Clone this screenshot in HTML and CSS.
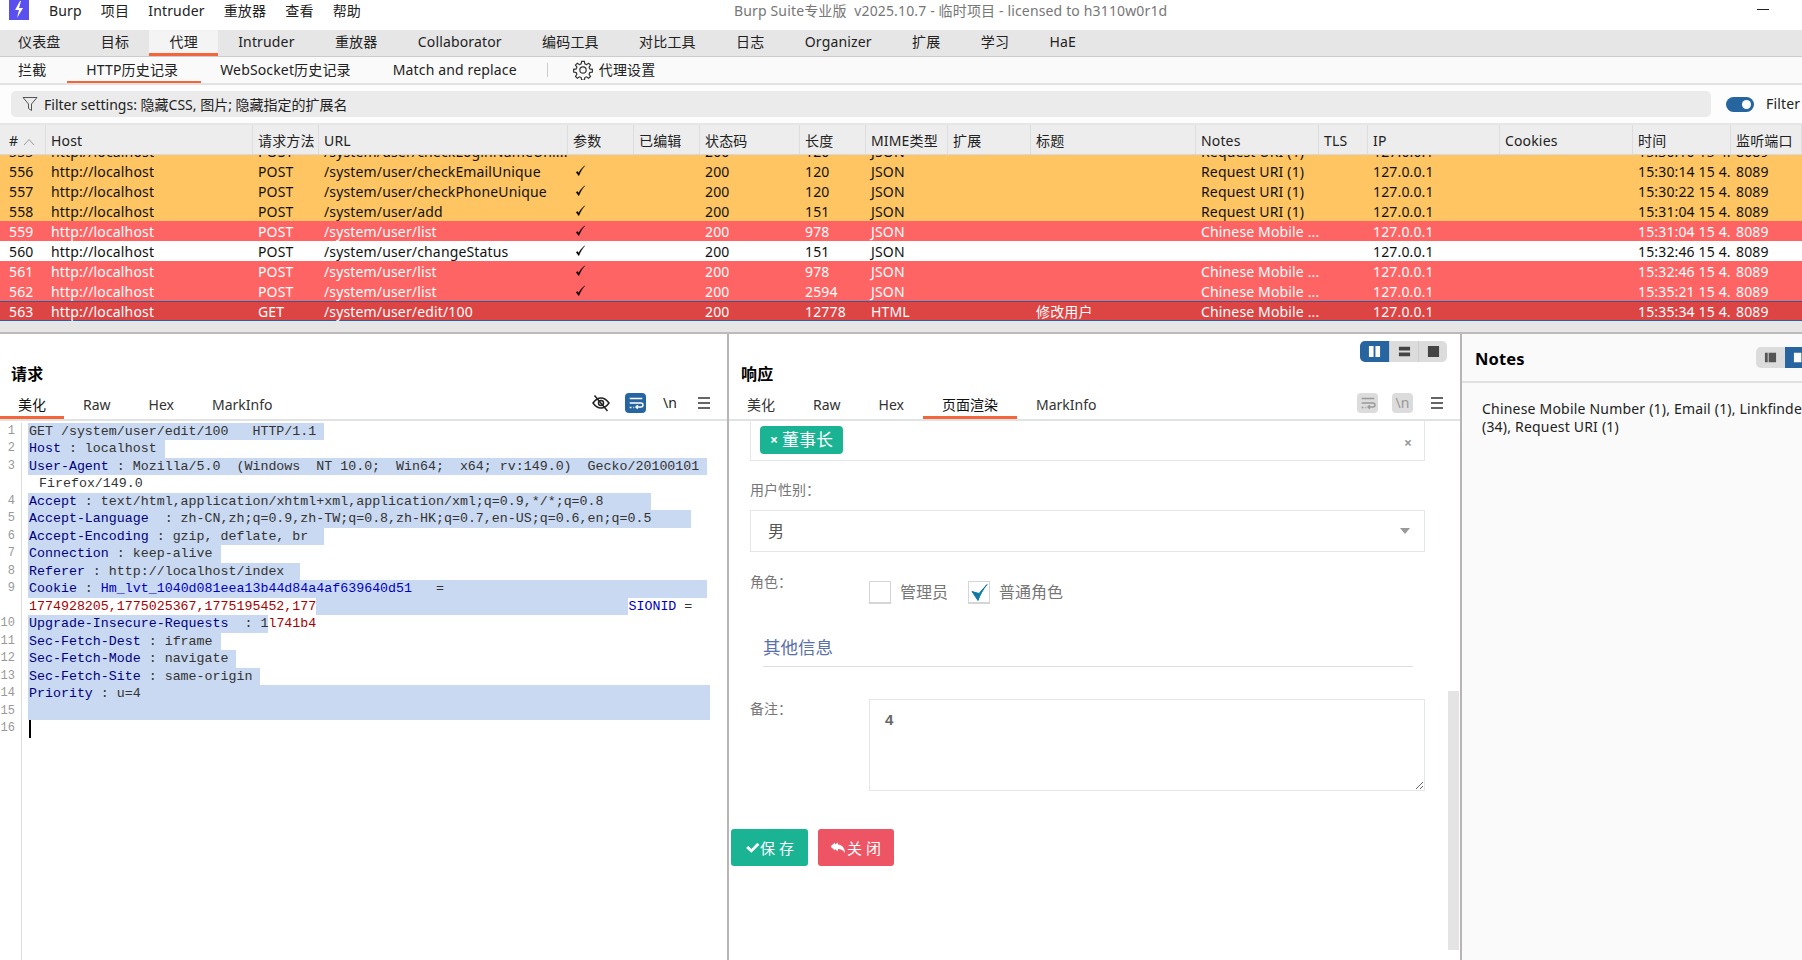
FILE: index.html
```html
<!DOCTYPE html>
<html lang="zh">
<head>
<meta charset="utf-8">
<title>Burp Suite</title>
<link rel="stylesheet" href="styles.css">
</head>
<body>
<header class="titlebar">
  <div class="logo"><svg viewBox="0 0 20 20" width="20" height="20"><path d="M11 1 6 10h4l-2 8 6-10h-4l2-7z" fill="#fff"/></svg></div>
  <nav class="menu"><span>Burp</span><span>项目</span><span>Intruder</span><span>重放器</span><span>查看</span><span>帮助</span></nav>
  <div class="apptitle">Burp Suite专业版&nbsp; v2025.10.7 - 临时项目 - licensed to h3110w0r1d</div>
  <div class="minimize"></div>
</header>

<nav class="maintabs">
  <span class="mtab">仪表盘</span><span class="mtab">目标</span><span class="mtab active">代理</span><span class="mtab">Intruder</span><span class="mtab">重放器</span><span class="mtab">Collaborator</span><span class="mtab">编码工具</span><span class="mtab">对比工具</span><span class="mtab">日志</span><span class="mtab">Organizer</span><span class="mtab">扩展</span><span class="mtab">学习</span><span class="mtab">HaE</span>
</nav>

<nav class="subtabs">
  <span class="stab">拦截</span><span class="stab active">HTTP历史记录</span><span class="stab">WebSocket历史记录</span><span class="stab">Match and replace</span>
  <span class="subsep"></span>
  <span class="settings">
    <svg viewBox="0 0 22 22" width="20" height="20" fill="none" stroke="#333" stroke-width="1.3"><path d="M9.500 1.500h3l.5 2.800 1.900.8 2.300-1.600 2.100 2.100-1.600 2.300.8 1.900 2.800.5v3l-2.800.5-.8 1.900 1.600 2.300-2.100 2.100-2.300-1.600-1.900.8-.5 2.800h-3l-.5-2.800-1.900-.8-2.300 1.600-2.100-2.100 1.600-2.300-.8-1.900-2.800-.5v-3l2.800-.5.8-1.900-1.600-2.300 2.100-2.100 2.300 1.600 1.900-.8z"/><circle cx="11" cy="11" r="3.500"/></svg>
    代理设置
  </span>
</nav>

<section class="filterrow">
  <div class="filterbar">
    <svg viewBox="0 0 16 16" width="16" height="16" fill="none" stroke="#555" stroke-width="1"><path d="M1 1.500h14L9.500 8v6.500l-3-2V8z"/></svg>
    <span>Filter settings: 隐藏CSS, 图片; 隐藏指定的扩展名</span>
  </div>
  <span class="toggle"><i></i></span>
  <span class="filterlabel">Filter</span>
</section>

<section class="table">
  <div class="row head">
    <span><b>#</b><svg class="sort" viewBox="0 0 12 8" width="12" height="8" fill="none" stroke="#999" stroke-width="1"><path d="M1 7l5-5.500 5 5.500"/></svg></span><span>Host</span><span>请求方法</span><span>URL</span><span>参数</span><span>已编辑</span><span>状态码</span><span>长度</span><span>MIME类型</span><span>扩展</span><span>标题</span><span>Notes</span><span>TLS</span><span>IP</span><span>Cookies</span><span>时间</span><span>监听端口</span>
  </div>
  <div class="rows">
    <div class="row orange partial"><span>555</span><span>http://localhost</span><span>POST</span><span>/system/user/checkLoginNameUni...</span><span></span><span></span><span>200</span><span>120</span><span>JSON</span><span></span><span></span><span>Request URI (1)</span><span></span><span>127.0.0.1</span><span></span><span>15:30:10 15 4...</span><span>8089</span></div>
    <div class="row orange"><span>556</span><span>http://localhost</span><span>POST</span><span>/system/user/checkEmailUnique</span><span><svg class="tick" viewBox="0 0 12 14"><path d="M1 8.500l3 4C6 8 8 4 11 1 7.500 3.500 5.500 6.500 4 9.500L2.500 7.500z"/></svg></span><span></span><span>200</span><span>120</span><span>JSON</span><span></span><span></span><span>Request URI (1)</span><span></span><span>127.0.0.1</span><span></span><span>15:30:14 15 4...</span><span>8089</span></div>
    <div class="row orange"><span>557</span><span>http://localhost</span><span>POST</span><span>/system/user/checkPhoneUnique</span><span><svg class="tick" viewBox="0 0 12 14"><path d="M1 8.500l3 4C6 8 8 4 11 1 7.500 3.500 5.500 6.500 4 9.500L2.500 7.500z"/></svg></span><span></span><span>200</span><span>120</span><span>JSON</span><span></span><span></span><span>Request URI (1)</span><span></span><span>127.0.0.1</span><span></span><span>15:30:22 15 4...</span><span>8089</span></div>
    <div class="row orange"><span>558</span><span>http://localhost</span><span>POST</span><span>/system/user/add</span><span><svg class="tick" viewBox="0 0 12 14"><path d="M1 8.500l3 4C6 8 8 4 11 1 7.500 3.500 5.500 6.500 4 9.500L2.500 7.500z"/></svg></span><span></span><span>200</span><span>151</span><span>JSON</span><span></span><span></span><span>Request URI (1)</span><span></span><span>127.0.0.1</span><span></span><span>15:31:04 15 4...</span><span>8089</span></div>
    <div class="row red"><span>559</span><span>http://localhost</span><span>POST</span><span>/system/user/list</span><span><svg class="tick" viewBox="0 0 12 14"><path d="M1 8.500l3 4C6 8 8 4 11 1 7.500 3.500 5.500 6.500 4 9.500L2.500 7.500z"/></svg></span><span></span><span>200</span><span>978</span><span>JSON</span><span></span><span></span><span>Chinese Mobile ...</span><span></span><span>127.0.0.1</span><span></span><span>15:31:04 15 4...</span><span>8089</span></div>
    <div class="row"><span>560</span><span>http://localhost</span><span>POST</span><span>/system/user/changeStatus</span><span><svg class="tick" viewBox="0 0 12 14"><path d="M1 8.500l3 4C6 8 8 4 11 1 7.500 3.500 5.500 6.500 4 9.500L2.500 7.500z"/></svg></span><span></span><span>200</span><span>151</span><span>JSON</span><span></span><span></span><span></span><span></span><span>127.0.0.1</span><span></span><span>15:32:46 15 4...</span><span>8089</span></div>
    <div class="row red"><span>561</span><span>http://localhost</span><span>POST</span><span>/system/user/list</span><span><svg class="tick" viewBox="0 0 12 14"><path d="M1 8.500l3 4C6 8 8 4 11 1 7.500 3.500 5.500 6.500 4 9.500L2.500 7.500z"/></svg></span><span></span><span>200</span><span>978</span><span>JSON</span><span></span><span></span><span>Chinese Mobile ...</span><span></span><span>127.0.0.1</span><span></span><span>15:32:46 15 4...</span><span>8089</span></div>
    <div class="row red"><span>562</span><span>http://localhost</span><span>POST</span><span>/system/user/list</span><span><svg class="tick" viewBox="0 0 12 14"><path d="M1 8.500l3 4C6 8 8 4 11 1 7.500 3.500 5.500 6.500 4 9.500L2.500 7.500z"/></svg></span><span></span><span>200</span><span>2594</span><span>JSON</span><span></span><span></span><span>Chinese Mobile ...</span><span></span><span>127.0.0.1</span><span></span><span>15:35:21 15 4...</span><span>8089</span></div>
    <div class="row selected"><span>563</span><span>http://localhost</span><span>GET</span><span>/system/user/edit/100</span><span></span><span></span><span>200</span><span>12778</span><span>HTML</span><span></span><span>修改用户</span><span>Chinese Mobile ...</span><span></span><span>127.0.0.1</span><span></span><span>15:35:34 15 4...</span><span>8089</span></div>
  </div>
</section>
<div class="hsplit"></div>

<main class="panes">
  <section class="pane request">
    <div class="panehead"><h2>请求</h2></div>
    <div class="panetabs">
      <span class="ptab active first">美化</span><span class="ptab">Raw</span><span class="ptab">Hex</span><span class="ptab">MarkInfo</span>
      <div class="tools">
        <svg class="tool" viewBox="0 0 20 20" fill="none" stroke="#222" stroke-width="1.500"><path d="M2 10c2.500-3.500 5-5 8-5s5.500 1.500 8 5c-2.500 3.500-5 5-8 5s-5.500-1.500-8-5z"/><circle cx="10" cy="10" r="2.500"/><path d="M3.500 2.500l13 15.500"/></svg>
        <span class="iconbtn on"><svg viewBox="0 0 20 20" fill="none" stroke="#fff" stroke-width="1.600"><path d="M3 5h14M3 10h12.500a2 2 0 0 1 0 4.500H10M12 12.500l-2 2 2 2M3 15h2M7 15h1"/></svg></span>
        <span class="nl">\n</span>
        <svg class="tool" viewBox="0 0 20 20" fill="none" stroke="#333" stroke-width="1.600"><path d="M4 5h12M4 10h12M4 15h12"/></svg>
      </div>
    </div>
    <div class="editor">
      <div class="ln"><i>1</i><code><span class="sel">GET /system/user/edit/100   HTTP/1.1 </span></code></div>
      <div class="ln"><i>2</i><code><span class="sel"><b>Host</b> : localhost </span></code></div>
      <div class="ln"><i>3</i><code><span class="sel"><b>User-Agent</b> : Mozilla/5.0  (Windows  NT 10.0;  Win64;  x64; rv:149.0)  Gecko/20100101 </span></code></div>
      <div class="ln"><i></i><code class="indent">Firefox/149.0</code></div>
      <div class="ln"><i>4</i><code><span class="sel"><b>Accept</b> : text/html,application/xhtml+xml,application/xml;q=0.9,*/*;q=0.8      </span></code></div>
      <div class="ln"><i>5</i><code><span class="sel"><b>Accept-Language</b>  : zh-CN,zh;q=0.9,zh-TW;q=0.8,zh-HK;q=0.7,en-US;q=0.6,en;q=0.5     </span></code></div>
      <div class="ln"><i>6</i><code><span class="sel"><b>Accept-Encoding</b> : gzip, deflate, br  </span></code></div>
      <div class="ln"><i>7</i><code><span class="sel"><b>Connection</b> : keep-alive </span></code></div>
      <div class="ln"><i>8</i><code><span class="sel"><b>Referer</b> : http://localhost/index  </span></code></div>
      <div class="ln"><i>9</i><code><span class="sel"><b>Cookie</b> : <u>Hm_lvt_1040d081eea13b44d84a4af639640d51</u>   =                                 </span></code></div>
      <div class="ln"><i></i><code><s>1774928205,1775025367,1775195452,177</s><span class="sel">                                       </span><u>SIONID</u> =</code></div>
      <div class="ln"><i>10</i><code><span class="sel"><b>Upgrade-Insecure-Requests</b>  : 1</span><s>l741b4</s></code></div>
      <div class="ln"><i>11</i><code><span class="sel"><b>Sec-Fetch-Dest</b> : iframe </span></code></div>
      <div class="ln"><i>12</i><code><span class="sel"><b>Sec-Fetch-Mode</b> : navigate </span></code></div>
      <div class="ln"><i>13</i><code><span class="sel"><b>Sec-Fetch-Site</b> : same-origin </span></code></div>
      <div class="ln"><i>14</i><code><span class="sel wide"><b>Priority</b> : u=4</span></code></div>
      <div class="ln"><i>15</i><code><span class="sel wide"></span></code></div>
      <div class="ln"><i>16</i><code><span class="caret"></span></code></div>
      <div class="gutterfill"></div>
    </div>
  </section>

  <section class="pane response">
    <div class="panehead">
      <h2>响应</h2>
      <div class="layoutbtns">
        <span class="lb on"><svg viewBox="0 0 14 14"><path d="M1 1h5v12H1zM8 1h5v12H8z" fill="#fff"/></svg></span>
        <span class="lb"><svg viewBox="0 0 14 14"><path d="M1 2h12v4H1zM1 8h12v4H1z" fill="#444"/></svg></span>
        <span class="lb"><svg viewBox="0 0 14 14"><path d="M1 1h12v12H1z" fill="#444"/></svg></span>
      </div>
    </div>
    <div class="panetabs">
      <span class="ptab">美化</span><span class="ptab">Raw</span><span class="ptab">Hex</span><span class="ptab active">页面渲染</span><span class="ptab">MarkInfo</span>
      <div class="tools">
        <span class="iconbtn off"><svg viewBox="0 0 20 20" fill="none" stroke="#999" stroke-width="1.600"><path d="M3 5h14M3 10h12.500a2 2 0 0 1 0 4.500H10M12 12.500l-2 2 2 2M3 15h2M7 15h1"/></svg></span>
        <span class="iconbtn off nloff">\n</span>
        <svg class="tool" viewBox="0 0 20 20" fill="none" stroke="#333" stroke-width="1.600"><path d="M4 5h12M4 10h12M4 15h12"/></svg>
      </div>
    </div>
    <div class="webview">
      <form class="form">
        <div class="multi"><span class="tag"><em>×</em>董事长</span><span class="clear">×</span></div>
        <label class="flabel gender">用户性别：</label>
        <div class="select"><span>男</span><i class="caretdown"></i></div>
        <div class="roles">
          <label class="flabel rolelabel">角色：</label>
          <span class="check"></span><span class="checklabel">管理员</span>
          <span class="check"><svg viewBox="0 0 20 20" width="20" height="21"><path d="M3 9l6 9C11 12 14 7 18 2l-8 9z" fill="#0e7aa5" stroke="#0e7aa5"/></svg></span><span class="checklabel">普通角色</span>
        </div>
        <h4 class="section">其他信息</h4>
        <div class="remark">
          <label class="flabel">备注：</label>
          <textarea class="note" readonly>4</textarea>
        </div>
      </form>
      <div class="actions">
        <button type="button" class="btn save"><svg viewBox="0 0 14 12" width="15" height="13"><path d="M1 6.500l2-2 3 3L11.500 1.500l2 2L6 11z" fill="#fff"/></svg>保 存</button>
        <button type="button" class="btn close"><svg viewBox="0 0 16 12" width="16" height="13"><path d="M7 1 1 5l6 5V7.500c3 0 5 1 7 4 0-5-3-8-7-8.500zM4 1 0 4.500 0 5.500 4 9z" fill="#fff"/></svg>关 闭</button>
      </div>
      <div class="vscroll"></div>
    </div>
  </section>

  <aside class="notes">
    <div class="noteshead">
      <h3>Notes</h3>
      <div class="notebtns">
        <span class="nb"><svg viewBox="0 0 14 14" width="13" height="13"><path d="M1 2h3v10H1zM5 2h8v10H5z" fill="#555"/></svg></span>
        <span class="nb on"><svg viewBox="0 0 14 14" width="13" height="13"><path d="M1 2h8v10H1z" fill="#fff"/></svg></span>
      </div>
    </div>
    <p class="notestext">Chinese Mobile Number (1), Email (1), Linkfinder (34), Request URI (1)</p>
  </aside>
</main>
</body>
</html>
```
FILE: styles.css
```css
* { box-sizing: border-box; }
html, body { margin: 0; padding: 0; }
body {
  width: 1802px; height: 960px; overflow: hidden;
  display: flex; flex-direction: column;
  background: #fff; color: #111;
  font: 14px/20px "Noto Sans", "Noto Sans CJK SC", sans-serif;
  letter-spacing: .15px;
}

/* title bar */
.titlebar { height: 30px; display: flex; align-items: flex-start; position: relative; flex: none; }
.logo { width: 20px; height: 20px; margin-left: 9px; background: #5a50f0; flex: none; }
.menu { display: flex; margin-left: 20px; padding-top: 1px; color: #222; }
.menu span { margin-right: 19.100px; }
.apptitle { position: absolute; left: 734px; top: 1px; color: #777; white-space: nowrap; }
.minimize { position: absolute; left: 1757px; top: 9px; width: 12px; height: 1px; background: #222; }

/* main tabs */
.maintabs { height: 27px; flex: none; display: flex; background: #e6e6e6; border-bottom: 1px solid #ccc; padding-left: 18px; }
.mtab { padding: 2px 20.200px 0; height: 26px; color: #222; white-space: nowrap; }
.mtab:first-child { padding-left: 0; }
.mtab.active { background: #f4f4f4; border-bottom: 3px solid #f4663a; }

/* sub tabs */
.subtabs { height: 28px; flex: none; display: flex; align-items: flex-start; background: #fafafa; border-bottom: 2px solid #e2e2e2; padding-left: 18px; }
.stab { height: 26px; padding: 3px 0 0; margin-right: 42px; color: #222; white-space: nowrap; position: relative; }
.stab:first-child { margin-right: 40px; }
.stab.active::after { content: ""; position: absolute; left: -19px; right: -23px; bottom: 0; height: 2.500px; background: #f4663a; }
.subsep { width: 1px; height: 14px; margin: 6px 25px 0 -12px; background: #ccc; }
.settings { display: flex; align-items: center; gap: 6px; padding-top: 3px; color: #222; }

/* filter */
.filterrow { height: 40px; flex: none; display: flex; align-items: center; padding: 0 0 0 11px; background: #fdfdfd; border-bottom: 2px solid #e6e6e6; }
.filterbar { width: 1700px; height: 26px; display: flex; align-items: center; gap: 6px; padding-left: 11px; background: #ebebeb; border-radius: 5px; color: #222; flex: none; letter-spacing: 0; }
.filterbar span { padding-top: 2px; }
.toggle { width: 28px; height: 15px; margin-left: 15px; border-radius: 8px; background: #26659f; position: relative; flex: none; }
.toggle i { position: absolute; right: 3px; top: 3px; width: 9px; height: 9px; border-radius: 50%; background: #fff; }
.filterlabel { margin-left: 12px; color: #222; }

/* table */
.table { flex: none; overflow: hidden; }
.row {
  display: grid;
  grid-template-columns: 46px 207px 66px 249px 66px 66px 100px 66px 82px 83px 165px 123px 49px 132px 133px 98px 71px;
  height: 20px; line-height: 20px; color: #111; background: #fff;
}
.row > span { padding: 1px 0 0 5px; overflow: hidden; white-space: nowrap; }
.row > span:first-child { padding-left: 9px; }
.head { height: 30px; line-height: 30px; background: #ededed; position: relative; z-index: 1; border-bottom: 1px solid #d8d8d8; color: #222; }
.head > span { border-right: 1px solid #ddd; }
.head b { font-weight: 400; }
.sort { margin-left: 5px; }
.rows { height: 166px; overflow: hidden; }
.partial { margin-top: -14px; }
.orange { background: #fec562; }
.red { background: #ff6464; color: #fff; }
.selected { background: #dd4444; color: #fff; box-shadow: inset 0 1px 0 #2a6099, inset 0 -1px 0 #2a6099; }
.tick { width: 11px; height: 12px; margin: 3px 0 0 2px; fill: #000; stroke: #000; stroke-width: .5px; }
.hsplit { height: 13px; flex: none; background: #e6e6e6; border-bottom: 2px solid #bbb; }

/* panes */
.panes { flex: 1; display: flex; min-height: 0; }
.pane { display: flex; flex-direction: column; flex: none; border-right: 2px solid #b9b5b5; }
.request { width: 729px; }
.response { width: 733px; }
.panehead { height: 50px; display: flex; justify-content: space-between; align-items: flex-start; padding: 7px 13px 0 11px; }
.panehead h2 { margin: 23px 0 0; font-size: 16px; line-height: 20px; font-weight: 700; color: #000; }
.response .panehead { padding-left: 12px; }
.layoutbtns { display: flex; height: 21px; border-radius: 5px; overflow: hidden; }
.lb { width: 29px; background: #dcdcdc; display: flex; align-items: center; justify-content: center; border-left: 1px solid #ccc; }
.lb svg { width: 13px; height: 13px; }
.lb.on { background: #26659f; border: 0; }
.panetabs { height: 37px; flex: none; display: flex; border-bottom: 2px solid #dfe3e3; position: relative; color: #333; letter-spacing: 0; }
.ptab { padding: 11px 19px 0; height: 35px; border-bottom: 3px solid transparent; white-space: nowrap; }
.ptab.first { padding: 11px 18px 0; }
.ptab.active { border-bottom-color: #f4663a; color: #111; }
.response .ptab:first-child { padding-left: 18px; }
.tools { margin-left: auto; display: flex; align-items: center; gap: 14px; padding: 3px 13px 0 0; height: 35px; }
.tool { width: 20px; height: 20px; }
.iconbtn { width: 21px; height: 20px; border-radius: 4px; display: flex; align-items: center; justify-content: center; }
.iconbtn svg { width: 18px; height: 18px; }
.iconbtn.on { background: #26659f; }
.iconbtn.off { background: #dcdcdc; color: #999; }
.nl { width: 20px; text-align: center; color: #222; }

/* editor */
.editor { flex: 1; display: flex; flex-direction: column; padding-top: 1.500px; font: 13.300px/17.500px "Liberation Mono", monospace; letter-spacing: 0; color: #333; min-height: 0; }
.ln { height: 17.500px; display: flex; flex: none; }
.ln i { width: 22px; flex: none; padding-right: 6px; border-right: 1px solid #ddd; text-align: right; color: #999; font-style: normal; font-size: 12px; }
.ln code { font: inherit; white-space: pre; padding-left: 6px; flex: 1; }
.ln code.indent { padding-left: 17px; }
.sel { display: inline-block; height: 17.500px; background: #c9d9f1; vertical-align: top; padding-left: 1px; }
.sel.wide { display: block; width: 682px; }
.ln b { font-weight: 400; color: #000080; }
.ln u { text-decoration: none; color: #0000c0; }
.ln s { text-decoration: none; color: #a80000; }
.ln s:first-child { margin-left: 1px; }
.caret { display: block; width: 2px; height: 17.500px; margin-left: 1px; background: #000; }
.gutterfill { flex: 1; width: 22px; border-right: 1px solid #ddd; }

/* web view */
.webview { flex: 1; position: relative; overflow: hidden; color: #676a6c; min-height: 0; margin-top: -1px; letter-spacing: 0; }
.form { padding-left: 21px; }
.multi { width: 675px; height: 41px; border: 1px solid #e5e6e7; border-top: 0; display: flex; justify-content: space-between; padding: 6px 12px 0 9px; }
.tag { width: 83px; height: 28px; background: #1ab394; border-radius: 4px; color: #fff; font-size: 17px; line-height: 27px; display: flex; justify-content: center; gap: 4px; }
.tag em { font-style: normal; font-size: 14px; font-weight: 700; }
.clear { font-weight: 700; color: #999; padding-top: 7px; }
.flabel { display: block; line-height: 20px; font-size: 14px; color: #777; }
.gender { margin-top: 19px; }
.select { width: 675px; height: 42px; margin-top: 10px; border: 1px solid #e5e6e7; display: flex; align-items: center; justify-content: space-between; padding: 0 14px 0 17px; font-size: 16px; color: #555; }
.caretdown { width: 0; height: 0; border: 5px solid transparent; border-top: 6px solid #999; border-bottom: 0; }
.roles { display: flex; align-items: flex-start; margin-top: 20px; height: 32px; }
.rolelabel { width: 119px; flex: none; }
.check { width: 22px; height: 23px; margin-top: 9px; border: 1px solid #d5d5d5; border-bottom-width: 2px; flex: none; }
.checklabel { margin: 9px 20px 0 9px; font-size: 16px; line-height: 22px; color: #777; }
.section { width: 650px; margin: 30px 0 0 13px; height: 33px; border-bottom: 1.500px solid #ddd; font-size: 17.500px; line-height: 26px; font-weight: 400; color: #5b6fa8; }
.remark { display: flex; align-items: flex-start; margin-top: 32px; }
.remark .flabel { width: 119px; flex: none; }
.note { width: 556px; height: 92px; border: 1px solid #e5e6e7; padding: 9px 15px; margin: 0; font: 700 15px/22px "Liberation Sans", sans-serif; color: #666; outline: 0; resize: both; display: block; }
.actions { display: flex; gap: 10px; padding: 38px 0 0 2px; }
.btn { height: 37px; border: 0; border-radius: 3px; color: #fff; font: 15px/20px "Noto Sans", "Noto Sans CJK SC", sans-serif; display: flex; align-items: center; justify-content: center; padding: 0; }
.save { width: 77px; background: #1ab394; }
.close { width: 76px; background: #ed5565; }
.vscroll { position: absolute; right: 1px; top: 271px; width: 11px; height: 259px; background: #e4e4e4; }

/* notes */
.notes { flex: 1; min-width: 0; overflow: hidden; background: #fafafa; }
.noteshead { height: 49px; display: flex; justify-content: space-between; align-items: center; padding: 0 0 0 13px; border-bottom: 2px solid #e0e0e0; }
.noteshead h3 { margin: 3px 0 0; font-size: 16.500px; font-weight: 700; color: #000; }
.notebtns { display: flex; width: 46px; height: 21px; border-radius: 5px 0 0 5px; overflow: hidden; flex: none; }
.nb { width: 29px; flex: none; background: #dcdcdc; display: flex; align-items: center; justify-content: center; }
.nb.on { background: #26659f; }
.notestext { margin: 17px 0 0 20px; width: 345px; line-height: 18px; color: #222; letter-spacing: .2px; }
```
